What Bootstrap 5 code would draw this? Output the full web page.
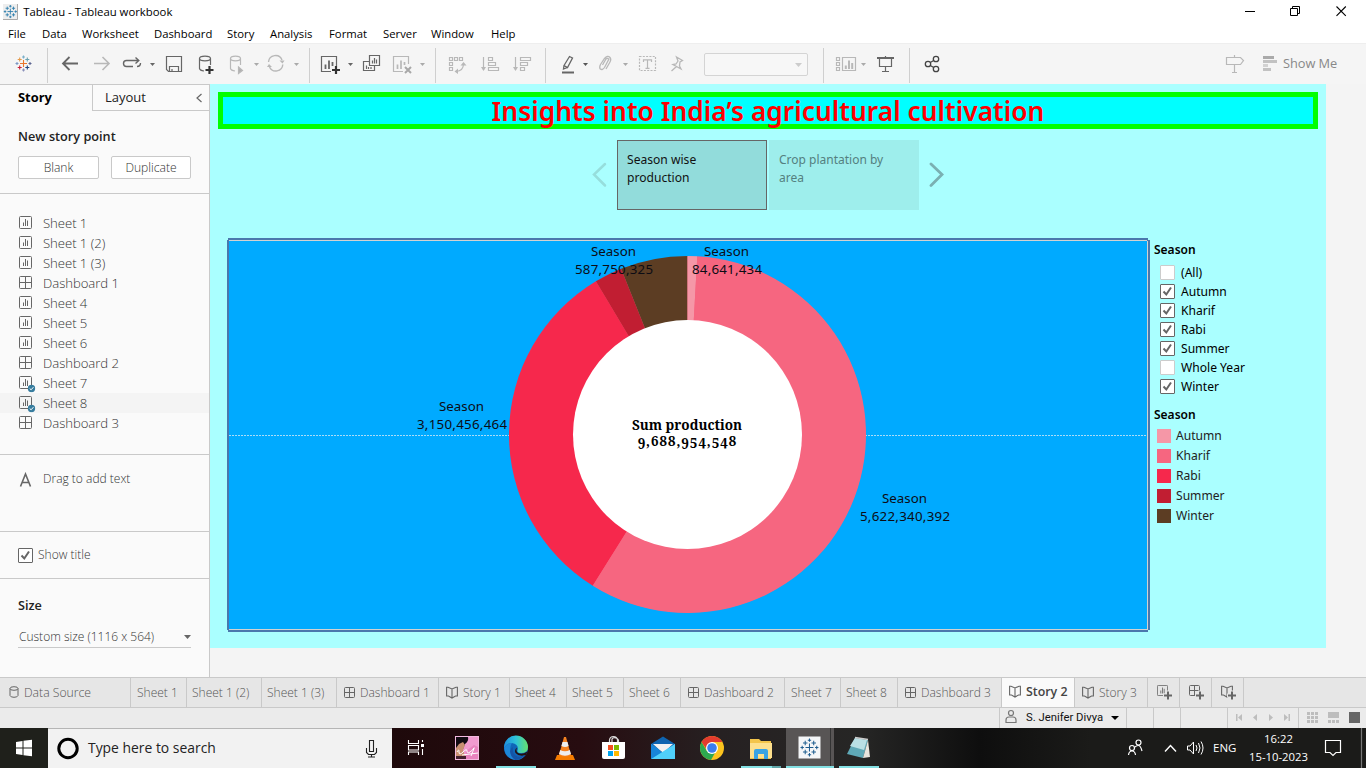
<!DOCTYPE html>
<html lang="en">
<head>
<meta charset="utf-8">
<title>Tableau - Tableau workbook</title>
<link href="https://cdn.jsdelivr.net/npm/bootstrap@5.3.0/dist/css/bootstrap.min.css" rel="stylesheet">
<style>
html,body{height:100%;overflow:hidden}
body{font-family:"Open Sans","Noto Sans",sans-serif;font-size:12px;line-height:1.2;color:#333;background:#f4f4f4}
svg{display:block;flex:none}
.app{width:1366px;height:768px;white-space:nowrap}
.titlebar{height:23px;padding-left:3px;color:#000;font-size:11.35px}
.menubar{height:20px;padding:2px 0 0 8px;color:#000;font-size:11.3px}
.m1{width:34px}.m2{width:40px}.m3{width:72px}.m4{width:73px}.m5{width:43px}.m6{width:59px}.m7{width:54px}.m8{width:48px}.m9{width:60px}
.toolbar-strip{height:41px;background:#f5f5f5;border-top:1px solid #eee;padding-top:1px}
.tsep{width:1px;height:35px;background:#cfcfcf;margin-top:3px;flex:none}
.toolbar-strip svg{fill:none;stroke:#666;stroke-width:1.2}
.toolbar-strip .off{stroke:#b8b8b8}
.combo{width:104px;height:23px;border:1px solid #d4d4d4;border-radius:2px;margin:8px 15px 0 13px;background:#f7f7f7;padding-right:5px;flex:none}
.showme{font-size:12.8px;color:#888;letter-spacing:-.05px;width:83px;padding-top:11px}
.workspace{height:593px}
.side{width:210px;background:#fafafa;border-right:1px solid #c9c9c9;border-top:1px solid #c9c9c9;color:#333;font-weight:300}
.side .hd{font-weight:600;font-size:12.7px;color:#222}
.side-tabs{height:26px}
.side-tabs .on{width:92px;padding-left:18px;font-weight:700;color:#000;font-size:12.9px}
.side-tabs .off-tab{border-left:1px solid #c9c9c9;border-bottom:1px solid #c9c9c9;color:#222;font-weight:400;font-size:13px;padding:0 6px 0 12px}
.blk{border-bottom:1px solid #c9c9c9}
.b-new{height:83px;padding:18px 18px 0}
.b-list{height:261px;padding-top:19px}
.b-drag{height:77px;padding:17px 18px 0}
.b-title{height:47px;padding-left:18px}
.b-size{height:98px;padding:19px 18px 0}
.pt-btn{height:23px;background:#fff;border:1px solid #c9c9c9;border-radius:2px;font-size:12.1px;color:#333;padding:0;line-height:21px;--bs-btn-font-weight:300}
.pt-btn.a{width:81px}.pt-btn.b{width:80px}
.row-item{height:20px;padding-left:19px;font-size:13.15px;letter-spacing:-.05px}
.row-item svg{margin:0 11px 1px 0}
.row-item span{padding-top:1px}
.row-item.hov{background:#f4f4f4}
.sizebox{border-bottom:1px solid #c9c9c9;height:23px;width:173px;font-size:12px;padding:1px 0 0 1px;margin-top:12px}
.story-canvas{width:1116px;height:564px;background:#aaffff;padding:8px 8px 0}
.story-title{height:37px;border:5px solid #0f0;background:#0ff;color:#f00;font:600 26.3px/29px "Noto Sans",sans-serif;letter-spacing:.04px;text-align:center}
.nav-pts{height:70px;margin-top:11px}
.pt{width:150px;height:70px;padding:11px 9px 0;font:12.1px/18px "Noto Sans",sans-serif;white-space:normal}
.pt.cur{background:#92dcdb;border:1px solid #666;color:#111;padding-top:10px}
.pt.nxt{background:#9eeeec;color:#54807f;margin-left:2px;padding-left:10px;font-size:12px}
.viz{margin:28px 0 0 8px}
.legend{width:160px;padding:5px 0 0 4px;font-family:"Noto Sans",sans-serif;color:#000;font-size:12.1px}
.legend .lh{font-weight:600;font-size:12px;height:14px;line-height:14px}
.fl-first{margin-top:6px}
.fl{height:19px;padding-left:6px}
.fl .lb,.lg .lb{padding-top:1px}
.cb{width:15px;height:15px;border:1px solid #666;background:#fff;border-radius:1px;margin-right:6px;flex:none}
.b-title .cb{margin-right:5px}
.cb.no{border-color:#ccc}
.second-lh{margin-top:12px;margin-bottom:4px}
.lg{height:20px;padding-left:3px;color:#222}
.sw{width:14px;height:14px;margin-right:5px}
.tabs-strip{height:31px;background:#e6e6e6;border-top:1px solid #c9c9c9;border-bottom:1px solid #c9c9c9;color:#555;font-size:12px;font-weight:300}
.wt{border-right:1px solid #c9c9c9;padding-left:6px;flex:none;padding-top:1px;font-weight:300}
.wt svg{margin:0 5px 2px 0}
.w131{width:131px;padding-left:9px;font-size:12.2px}.w56{width:56px}.w75{width:75px;padding-left:5px}.w102{width:102px;padding-left:7px}.w71{width:71px;padding-left:7px}.w57{width:57px;padding-left:5px}.w104{width:104px;padding-left:7px}.w73{width:73px;padding-left:7px}.w32{width:32px;padding-left:9px}
.wt.cur{background:#fafafa;font-weight:600;color:#444;padding-top:0;font-size:12.4px}
.status{height:20px;background:#ebebeb;color:#111;font-family:Roboto,sans-serif;font-size:11.3px}
.sc{border-left:1px solid #c9c9c9;flex:none}
.s1{width:127px}.s2{width:27px}.s3{width:47px}.s4{width:71px}.s5{width:68px}
.taskbar{height:40px;background:linear-gradient(90deg,#1f201b 0,#1f201b 48px,#1e090b 392px,#270c10 580px,#262122 720px,#262625 860px,#0e0e0e 980px,#1b1b19 1090px,#1b1b19)}
.search{width:344px;background:#f2f2f2;border-top:1px solid #b5b5b5;font-size:13.9px;color:#222}
.tk{color:#fff;font-size:11.3px}
.active-app{background:#585555}
.eng{width:36px;flex:none;font-size:11.5px}
.clock{width:59px;line-height:18px;flex:none;padding-bottom:1px}
</style>
</head>
<body>
<svg width="0" height="0" class="position-absolute">
<defs>
<symbol id="sheet" viewBox="0 0 13 13"><rect x=".5" y=".5" width="12" height="12" rx="1" fill="none" stroke="#666"/><path d="M4.500 10V6.500M6.500 10V3M8.500 10V4.500" stroke="#666"/></symbol>
<symbol id="dash" viewBox="0 0 13 13"><rect x=".5" y=".5" width="12" height="12" rx="1" fill="none" stroke="#666"/><path d="M6.500 .5V12.500M.5 6.500H12.500" stroke="#666"/></symbol>
<symbol id="dash11" viewBox="0 0 11 11"><rect x=".5" y=".5" width="10" height="10" rx="1" fill="none" stroke="#666"/><path d="M5.500 .5V10.500M.5 5.500H10.500" stroke="#666"/></symbol>
<symbol id="book" viewBox="0 0 12 13"><path d="M.6 1.200H2L6 3 10 1.200H11.400V10H9.500L6 12 2.500 10H.6ZM6 3V12" fill="none" stroke="#666" stroke-width="1.100"/></symbol>
<symbol id="tick" viewBox="0 0 13 13"><path d="M2.500 6.500L5.300 9.500L10 2.500" fill="none" stroke="#666" stroke-width="2"/></symbol>
<symbol id="badge" viewBox="0 0 8 8"><circle cx="4" cy="4" r="3.700" fill="#367c9e"/><path d="M2.200 4L3.600 5.300 5.900 2.700" fill="none" stroke="#fff"/></symbol>
<g id="pluses"><path d="M8 4.500V11.500M4.500 8H11.500"/><path d="M4.200 2V6M2.200 4H6.200M11.800 2V6M9.800 4H13.800M4.200 10V14M2.200 12H6.200M11.800 10V14M9.800 12H13.800"/><path d="M8 0V3M6.500 1.500H9.500M8 13V16M6.500 14.500H9.500M0 8H3M1.500 6.500V9.500M13 8H16M14.500 6.500V9.500"/></g>
</defs>
</svg>
<div class="app d-flex flex-column">
  <header class="bg-white">
    <div class="titlebar d-flex align-items-center">
      <svg width="15" height="16" viewBox="0 0 15 16"><rect width="15" height="16" fill="#eee"/><path d="M14.500 0V15.500H0" fill="none" stroke="#aaa"/><g transform="translate(.8 1) scale(.82)" stroke="#2f7fae" stroke-width="1.100"><use href="#pluses"/></g></svg>
      <span class="ps-1 flex-grow-1">&#8202;Tableau - Tableau workbook</span>
      <svg width="126" height="22" viewBox="1240 0 126 22" fill="none" stroke="#000"><path d="M1245 10.500H1255"/><path d="M1290.500 7.500H1297.500V14.500H1290.500ZM1292.500 7.500V5.500H1299.500V12.500H1297.500"/><path d="M1336.500 5.500L1345.800 14.800M1345.800 5.500L1336.500 14.800" stroke-width="1.100"/></svg>
    </div>
    <nav class="menubar d-flex align-items-center">
      <span class="m1">File</span><span class="m2">Data</span><span class="m3">Worksheet</span><span class="m4">Dashboard</span><span class="m5">Story</span><span class="m6">Analysis</span><span class="m7">Format</span><span class="m8">Server</span><span class="m9">Window</span><span>Help</span>
    </nav>
  </header>

  <div class="toolbar-strip d-flex">
    <svg width="47" height="39" viewBox="0 45 47 39"><g transform="translate(15.500 55.500)" stroke-width="1.100"><path d="M8 4.500V11.500M4.500 8H11.500" stroke="#e8762c"/><path d="M4.200 2V6M2.200 4H6.200" stroke="#e49a4a"/><path d="M11.800 2V6M9.800 4H13.800" stroke="#6aa2b0"/><path d="M4.200 10V14M2.200 12H6.200" stroke="#c72037"/><path d="M11.800 10V14M9.800 12H13.800" stroke="#1f447e"/><path d="M8 0V3M6.500 1.500H9.500" stroke="#7ab0ca"/><path d="M8 13V16M6.500 14.500H9.500" stroke="#8a90ba"/><path d="M0 8H3M1.500 6.500V9.500" stroke="#7b97c4"/><path d="M13 8H16M14.500 6.500V9.500" stroke="#5b6591"/></g></svg>
    <i class="tsep"></i>
    <svg width="38" height="39" viewBox="48 45 38 39"><path stroke-width="1.800" d="M78 63.500H63M69.500 57L63 63.500 69.500 70"/></svg>
    <svg class="off" width="30" height="39" viewBox="86 45 30 39"><path stroke-width="1.600" d="M94 63.500H109M102.500 57L109 63.500 102.500 70"/></svg>
    <svg width="44" height="39" viewBox="116 45 44 39"><path d="M133 66.500H126.500Q123.500 66.500 123.500 63.500T126.500 60.500H139M135.500 57.500L138.800 60.500 135.500 63.500M137 66.500Q140.500 66.500 140.500 63" stroke-width="1.400"/><path d="M150 63H155L152.500 66Z" fill="#666" stroke="none"/></svg>
    <svg width="30" height="39" viewBox="160 45 30 39"><path d="M166.500 56.500H181.500V71.500H168.500L166.500 69.500ZM169.500 71V66.500H178.500V71M172 71V69"/></svg>
    <svg width="34" height="39" viewBox="190 45 34 39"><ellipse cx="205" cy="58.500" rx="5.500" ry="2.300"/><path d="M199.500 58.500V68.500Q200 70.500 204 71M210.500 58.500V65"/><path d="M209.500 66V74M205.500 70H213.500" stroke="#333" stroke-width="2.200"/></svg>
    <svg class="off" width="38" height="39" viewBox="224 45 38 39"><ellipse cx="235.500" cy="58.500" rx="5" ry="2.300"/><path d="M230.500 58.500V68.500Q231 70.500 235 71M240.500 58.500V65"/><path d="M238.500 67L242.500 70.500 238.500 73.500Z" fill="#b0b0b0"/><path d="M254 63H259L256.500 66Z" fill="#aaa" stroke="none"/></svg>
    <svg class="off" width="47" height="39" viewBox="262 45 47 39"><path d="M268.500 62A7 7 0 0 1 282 60M282.800 64.500A7 7 0 0 1 269.500 67" stroke-width="1.400"/><path d="M279.500 60.500H284.500L282.500 63.500ZM267 67H272L269 64Z" fill="#b8b8b8" stroke="none"/><path d="M294 63H299L296.500 66Z" fill="#aaa" stroke="none"/></svg>
    <i class="tsep"></i>
    <svg width="47" height="39" viewBox="310 45 47 39"><path d="M331 71.500H321.500V56.500H336.500V66"/><path d="M325.500 69V64.500M329 69V60.500M332.500 66V62" stroke-width="1.800"/><path d="M336 66V74M332 70H340" stroke="#333" stroke-width="2.200"/><path d="M348 63H353L350.500 66Z" fill="#666" stroke="none"/></svg>
    <svg width="30" height="39" viewBox="357 45 30 39"><path d="M369.500 55.500H379.500V65.500H369.500ZM369 61.500H363.500V70.500H374.500V66M372.500 63.500V60.500M374.500 63.500V58M376.500 63.500V59.500M366.500 69V65.500M368.500 69V67M371 69V67"/></svg>
    <svg class="off" width="48" height="39" viewBox="387 45 48 39"><path d="M403 71.500H393.500V56.500H408.500V64"/><path d="M397.500 69V64.500M401 69V60.500M404.500 65V62" stroke-width="1.700"/><path d="M405 67L411 73M411 67L405 73" stroke="#a8a8a8" stroke-width="2"/><path d="M420 63H425L422.500 66Z" fill="#aaa" stroke="none"/></svg>
    <i class="tsep"></i>
    <svg class="off" width="36" height="39" viewBox="436 45 36 39"><path d="M449.500 57.500H452.500V60.500H449.500ZM454.500 57.500H457.500V60.500H454.500ZM459.500 57.500H462.500V60.500H459.500ZM449.500 62.500H452.500V65.500H449.500ZM449.500 67.500H452.500V70.500H449.500ZM456 71.500Q463.500 71 463.500 63.500"/><path d="M460.500 65.500L463.500 62 466.500 65.500ZM458 68.500L454.500 71.500 458 74Z" fill="#b8b8b8" stroke="none"/></svg>
    <svg class="off" width="34" height="39" viewBox="472 45 34 39"><path d="M483.500 57V70M488.500 57.500H492.500V60.500H488.500ZM488.500 62.500H495.500V65.500H488.500ZM488.500 67.500H498.500V70.500H488.500Z"/><path d="M481 67H486L483.500 71Z" fill="#b8b8b8" stroke="none"/></svg>
    <svg class="off" width="39" height="39" viewBox="506 45 39 39"><path d="M515.500 57V70M520.500 57.500H530.500V60.500H520.500ZM520.500 62.500H527.500V65.500H520.500ZM520.500 67.500H524.500V70.500H520.500Z"/><path d="M513 67H518L515.500 71Z" fill="#b8b8b8" stroke="none"/></svg>
    <i class="tsep"></i>
    <svg width="46" height="39" viewBox="546 45 46 39"><path d="M564 65.500L569.500 56.500 572.500 58 567.500 67.500ZM564 65.500L563.500 69 567.500 67.500" stroke-width="1.300"/><path d="M562 72.500H574" stroke-width="2"/><path d="M583 63H588L585.500 66Z" fill="#555" stroke="none"/></svg>
    <svg class="off" width="40" height="39" viewBox="592 45 40 39"><path d="M602.500 65L606 59Q607.500 57.500 608.800 59.200L604.500 67.500Q602.500 70.500 600.300 69Q599 67.500 600.500 64.500L604.500 58.500Q607.500 55 610 57.500Q611.500 59.500 610 62L606 69" stroke-width="1.300"/><path d="M623 63H628L625.500 66Z" fill="#aaa" stroke="none"/></svg>
    <svg class="off" width="31" height="39" viewBox="632 45 31 39"><rect x="639.500" y="56.500" width="16" height="14" stroke-dasharray="2 1.300"/><path d="M643.500 62V59.800H651.500V62M647.500 60V68M645.500 68.300H649.500"/></svg>
    <svg class="off" width="28" height="39" viewBox="663 45 28 39"><path d="M676.500 57L682.500 60.500 680 62 679.500 66 681 69 673 64.500 676 64 678 61ZM676.500 66.500L671.500 71" stroke-width="1.300"/></svg>
    <div class="combo d-flex align-items-center justify-content-end"><svg width="7" height="4" viewBox="0 0 7 4"><path d="M0 0H7L3.500 4Z" fill="#ccc" stroke="none"/></svg></div>
    <i class="tsep"></i>
    <svg class="off" width="47" height="39" viewBox="824 45 47 39"><path d="M836.500 57.500H839.500V60.500H836.500ZM836.500 62.500H839.500V65.500H836.500ZM836.500 67.500H839.500V70.500H836.500ZM842.500 57.500H855.500V70.500H842.500Z"/><path d="M845.800 69V65.500M849 69V60.500M852.200 69V63" stroke-width="2"/><path d="M861 63H866L863.500 66Z" fill="#aaa" stroke="none"/></svg>
    <svg width="38" height="39" viewBox="871 45 38 39"><path d="M877 58H894" stroke-width="2"/><path d="M879.500 58V66.500H891.500V58M885.500 56V58M885.500 66.500V71M882 71.500H889"/></svg>
    <i class="tsep"></i>
    <svg width="300" height="39" viewBox="910 45 300 39"><g stroke="#444" stroke-width="1.300"><circle cx="928" cy="64" r="2.700"/><circle cx="936" cy="59" r="2.700"/><circle cx="936" cy="69" r="2.700"/><path d="M930.300 62.500L933.700 60.500M930.300 65.500L933.700 67.500"/></g></svg>
    <svg class="off" width="50" height="39" viewBox="1210 45 50 39"><path d="M1226.500 57.500H1240.500L1243.500 60.500 1240.500 64.500H1226.500ZM1234.500 55V57M1234.500 64.500V72M1232 72.500H1237"/></svg>
    <svg width="23" height="39" viewBox="1260 45 23 39" ><g stroke="none"><path d="M1263 56H1274V59H1263Z" fill="#aaa"/><path d="M1263 60H1277V63H1263ZM1263 68H1271V71H1263Z" fill="#c2c2c2"/><path d="M1263 64H1268V67H1263Z" fill="#d2d2d2"/></g></svg>
    <span class="showme">Show Me</span>
  </div>

  <main class="workspace d-flex">
    <aside class="side flex-shrink-0">
      <div class="side-tabs d-flex">
        <div class="on d-flex align-items-center">Story</div>
        <div class="off-tab flex-grow-1 d-flex align-items-center justify-content-between">Layout<svg width="7" height="10" viewBox="0 0 7 10"><path d="M5.500 1L1 5 5.500 9" fill="none" stroke="#666" stroke-width="1.200"/></svg></div>
      </div>
      <section class="blk b-new">
        <div class="hd">New story point</div>
        <div class="d-flex justify-content-between mt-2 pt-1"><button class="btn pt-btn a">Blank</button><button class="btn pt-btn b">Duplicate</button></div>
      </section>
      <section class="blk b-list">
        <div class="row-item d-flex align-items-center"><svg width="13" height="13"><use href="#sheet"/></svg><span>Sheet 1</span></div>
        <div class="row-item d-flex align-items-center"><svg width="13" height="13"><use href="#sheet"/></svg><span>Sheet 1 (2)</span></div>
        <div class="row-item d-flex align-items-center"><svg width="13" height="13"><use href="#sheet"/></svg><span>Sheet 1 (3)</span></div>
        <div class="row-item d-flex align-items-center"><svg width="13" height="13"><use href="#dash"/></svg><span>Dashboard 1</span></div>
        <div class="row-item d-flex align-items-center"><svg width="13" height="13"><use href="#sheet"/></svg><span>Sheet 4</span></div>
        <div class="row-item d-flex align-items-center"><svg width="13" height="13"><use href="#sheet"/></svg><span>Sheet 5</span></div>
        <div class="row-item d-flex align-items-center"><svg width="13" height="13"><use href="#sheet"/></svg><span>Sheet 6</span></div>
        <div class="row-item d-flex align-items-center"><svg width="13" height="13"><use href="#dash"/></svg><span>Dashboard 2</span></div>
        <div class="row-item d-flex align-items-center"><svg width="13" height="13" overflow="visible"><use href="#sheet" width="13" height="13"/><use href="#badge" x="8.500" y="8.500" width="8" height="8"/></svg><span>Sheet 7</span></div>
        <div class="row-item hov d-flex align-items-center"><svg width="13" height="13" overflow="visible"><use href="#sheet" width="13" height="13"/><use href="#badge" x="8.500" y="8.500" width="8" height="8"/></svg><span>Sheet 8</span></div>
        <div class="row-item d-flex align-items-center"><svg width="13" height="13"><use href="#dash"/></svg><span>Dashboard 3</span></div>
      </section>
      <section class="blk b-drag d-flex align-items-start">
        <svg width="25" height="16" viewBox="0 0 25 16"><path d="M2.500 14.500L7.500 2 12.500 14.500M4.300 10.500H10.700" fill="none" stroke="#666" stroke-width="1.600"/></svg><span class="mt-auto mb-auto h-100">Drag to add text</span>
      </section>
      <section class="blk b-title d-flex align-items-center"><span class="cb"><svg width="13" height="13"><use href="#tick"/></svg></span><span>Show title</span></section>
      <section class="b-size">
        <div class="hd">Size</div>
        <div class="sizebox d-flex align-items-center justify-content-between">Custom size (1116 x 564)<svg width="7" height="4" viewBox="0 0 7 4"><path d="M0 0H7L3.500 4Z" fill="#666"/></svg></div>
      </section>
    </aside>

    <div class="story-canvas">
      <h1 class="story-title m-0">Insights into India’s agricultural cultivation</h1>
      <div class="nav-pts d-flex align-items-center justify-content-center">
        <svg width="25" height="26" viewBox="0 0 25 26"><path d="M13 2L2 12.500 13 23.500" fill="none" stroke="#96dedc" stroke-width="2.500" stroke-linecap="round"/></svg>
        <div class="pt cur">Season wise production</div>
        <div class="pt nxt">Crop plantation by area</div>
        <svg width="25" height="26" viewBox="0 0 25 26"><path d="M12 2L23 12.500 12 23.500" fill="none" stroke="#7ab0b2" stroke-width="2.800" stroke-linecap="round"/></svg>
      </div>
      <div class="viz d-flex">
        <svg width="924" height="394" viewBox="226 238 924 394" font-family="Noto Sans, sans-serif" font-size="13.300" text-anchor="middle" fill="#0c0c14">
          <path d="M228 238H1148V240H1150V630H1148V632H228V630H227V240H228Z" fill="#4a78ad"/>
          <path d="M229 240H1147V241H1148V630H229Z" fill="#d2d2d2"/>
          <rect x="229" y="241" width="918" height="388" fill="#00aaff"/>
          <path d="M229 435.500H1147" stroke="#a9dcf8" stroke-dasharray="2 1"/>
          <circle cx="687.500" cy="434.500" r="178" fill="#f66680"/>
          <path d="M687.500 434.500L592.770 585.800A178.500 178.500 0 0 1 595.890 281.300Z" fill="#f6284c"/>
          <path d="M687.500 434.500L595.890 281.300A178.500 178.500 0 0 1 621.090 268.810Z" fill="#c11e32"/>
          <path d="M687.500 434.500L621.090 268.810A178.500 178.500 0 0 1 687.500 256Z" fill="#5c3d23"/>
          <path d="M687.500 434.500V256A178.500 178.500 0 0 1 697.290 256.270Z" fill="#f597a7"/>
          <path d="M687.500 434.500L697.290 256.270A178.500 178.500 0 1 1 592.770 585.800Z" fill="#f66680"/>
          <circle cx="687.500" cy="434.500" r="114.500" fill="#fff"/>
          <text x="613.500" y="256" textLength="45">Season</text><text x="614" y="274" textLength="78">587,750,325</text>
          <text x="726.500" y="256" textLength="45">Season</text><text x="727" y="274" textLength="70">84,641,434</text>
          <text x="461.500" y="411" textLength="45">Season</text><text x="462" y="429" textLength="90">3,150,456,464</text>
          <text x="904.500" y="503" textLength="45">Season</text><text x="905" y="521" textLength="90">5,622,340,392</text>
          <g font-family="Noto Serif, serif" font-weight="700" fill="#000" font-size="13.500" style="font-variant-numeric:oldstyle-nums"><text x="687" y="430" textLength="110">Sum production</text><text x="687" y="445.500" textLength="99">9,688,954,548</text></g>
        </svg>
        <div class="legend">
          <div class="lh">Season</div>
          <div class="fl fl-first d-flex align-items-center"><span class="cb no"></span><span class="lb">(All)</span></div>
          <div class="fl d-flex align-items-center"><span class="cb"><svg width="13" height="13"><use href="#tick"/></svg></span><span class="lb">Autumn</span></div>
          <div class="fl d-flex align-items-center"><span class="cb"><svg width="13" height="13"><use href="#tick"/></svg></span><span class="lb">Kharif</span></div>
          <div class="fl d-flex align-items-center"><span class="cb"><svg width="13" height="13"><use href="#tick"/></svg></span><span class="lb">Rabi</span></div>
          <div class="fl d-flex align-items-center"><span class="cb"><svg width="13" height="13"><use href="#tick"/></svg></span><span class="lb">Summer</span></div>
          <div class="fl d-flex align-items-center"><span class="cb no"></span><span class="lb">Whole Year</span></div>
          <div class="fl d-flex align-items-center"><span class="cb"><svg width="13" height="13"><use href="#tick"/></svg></span><span class="lb">Winter</span></div>
          <div class="lh second-lh">Season</div>
          <div class="lg d-flex align-items-center"><svg class="sw"><rect width="14" height="14" fill="#f597a7"/></svg><span class="lb">Autumn</span></div>
          <div class="lg d-flex align-items-center"><svg class="sw"><rect width="14" height="14" fill="#f66680"/></svg><span class="lb">Kharif</span></div>
          <div class="lg d-flex align-items-center"><svg class="sw"><rect width="14" height="14" fill="#f6284c"/></svg><span class="lb">Rabi</span></div>
          <div class="lg d-flex align-items-center"><svg class="sw"><rect width="14" height="14" fill="#c11e32"/></svg><span class="lb">Summer</span></div>
          <div class="lg d-flex align-items-center"><svg class="sw"><rect width="14" height="14" fill="#5c3d23"/></svg><span class="lb">Winter</span></div>
        </div>
      </div>
    </div>
  </main>

  <nav class="tabs-strip d-flex">
    <div class="wt w131 d-flex align-items-center"><svg width="10" height="12" viewBox="0 0 10 12" fill="none" stroke="#666"><ellipse cx="5" cy="2.500" rx="4" ry="1.800"/><path d="M1 2.500V9.500Q1.500 11.300 5 11.300T9 9.500V2.500"/></svg>Data Source</div>
    <div class="wt w56 d-flex align-items-center">Sheet 1</div>
    <div class="wt w75 d-flex align-items-center">Sheet 1 (2)</div>
    <div class="wt w75 d-flex align-items-center">Sheet 1 (3)</div>
    <div class="wt w102 d-flex align-items-center"><svg width="11" height="11"><use href="#dash11"/></svg>Dashboard 1</div>
    <div class="wt w71 d-flex align-items-center"><svg width="12" height="13"><use href="#book"/></svg>Story 1</div>
    <div class="wt w57 d-flex align-items-center">Sheet 4</div>
    <div class="wt w57 d-flex align-items-center">Sheet 5</div>
    <div class="wt w57 d-flex align-items-center">Sheet 6</div>
    <div class="wt w104 d-flex align-items-center"><svg width="11" height="11"><use href="#dash11"/></svg>Dashboard 2</div>
    <div class="wt w56 d-flex align-items-center">Sheet 7</div>
    <div class="wt w57 d-flex align-items-center">Sheet 8</div>
    <div class="wt w104 d-flex align-items-center"><svg width="11" height="11"><use href="#dash11"/></svg>Dashboard 3</div>
    <div class="wt w73 cur d-flex align-items-center"><svg width="12" height="13"><use href="#book"/></svg>Story 2</div>
    <div class="wt w73 d-flex align-items-center"><svg width="12" height="13"><use href="#book"/></svg>Story 3</div>
    <div class="wt w32 d-flex align-items-center"><svg width="16" height="15"><use href="#sheet" width="11" height="11"/><path d="M11 5.500V15M6 10.500H16" stroke="#e6e6e6" stroke-width="4"/><path d="M11 6.500V14.500M7 10.500H15" stroke="#666" stroke-width="2"/></svg></div>
    <div class="wt w32 d-flex align-items-center"><svg width="16" height="15"><use href="#dash11" width="11" height="11"/><path d="M11 5.500V15M6 10.500H16" stroke="#e6e6e6" stroke-width="4"/><path d="M11 6.500V14.500M7 10.500H15" stroke="#666" stroke-width="2"/></svg></div>
    <div class="wt w32 d-flex align-items-center"><svg width="16" height="15"><use href="#book" width="12" height="13"/><path d="M11 5.500V15M6 10.500H16" stroke="#e6e6e6" stroke-width="4"/><path d="M11 6.500V14.500M7 10.500H15" stroke="#666" stroke-width="2"/></svg></div>
  </nav>

  <div class="status d-flex justify-content-end">
    <div class="sc s1 d-flex align-items-center"><svg width="26" height="20" viewBox="1000 708 26 20" fill="none" stroke="#777" stroke-width="1.200"><circle cx="1011" cy="713" r="2.500"/><path d="M1006 722.500V720Q1006 717 1009 717H1013Q1016 717 1016 720V722.500Z"/></svg><span>S. Jenifer Divya</span><svg class="ms-2" width="8" height="4" viewBox="0 0 8 4"><path d="M0 0H8L4 4Z"/></svg></div>
    <div class="sc s2"></div><div class="sc s2"></div><div class="sc s3"></div>
    <div class="sc s4"><svg width="70" height="20" viewBox="1228 708 70 20" fill="#bdbdbd"><path d="M1236 714H1237.500V721H1236ZM1242 714V721L1238 717.500ZM1257 714V721L1253 717.500ZM1269 714V721L1273 717.500ZM1284 714V721L1288 717.500ZM1288.500 714H1290V721H1288.500Z"/></svg></div>
    <div class="sc s5"><svg width="67" height="20" viewBox="1299 708 67 20" fill="#bdbdbd"><path d="M1307 712h3v3h-3zM1311 712h3v3h-3zM1315 712h3v3h-3zM1307 716h3v3h-3zM1311 716h3v3h-3zM1315 716h3v3h-3zM1307 720h3v3h-3zM1311 720h3v3h-3zM1315 720h3v3h-3zM1328 712h11v6h-11zM1328 720h3v3h-3zM1332 720h3v3h-3zM1336 720h3v3h-3z"/><path d="M1349 712h11v11h-11z" fill="#666"/></svg></div>
  </div>

  <footer class="taskbar d-flex">
    <svg width="48" height="40" viewBox="0 728 48 40" fill="#fff"><path d="M16 742L22.500 741V747.500H16ZM23.500 740.800L32 739.800V747.500H23.500ZM16 748.500H22.500V755L16 754ZM23.500 748.500H32V756.300L23.500 755.200Z"/></svg>
    <div class="search d-flex align-items-center">
      <svg width="40" height="38" viewBox="48 729 40 38"><circle cx="68" cy="747.500" r="9.200" fill="none" stroke="#000" stroke-width="3"/></svg>
      <span class="flex-grow-1">Type here to search</span>
      <svg width="31" height="38" viewBox="361 729 31 38" fill="none" stroke="#222" stroke-width="1.100"><path d="M369.500 739.500H373.500V750.500H369.500ZM366.500 747V751.500L368.500 753.500H374.500L376.500 751.500V747M371.500 753.500V756M368 756H375"/></svg>
    </div>
    <svg width="48" height="40" viewBox="392 728 48 40" fill="none" stroke="#fff" stroke-width="1.100"><path d="M408.500 740V743.500H418.500V740M408.500 755V752H418.500V755M408.500 745.500H418.500V750H408.500ZM422.500 740V742M422.500 749V755"/><path d="M421 744H424V747H421Z" fill="#fff" stroke="none"/></svg>
    <svg width="52" height="40" viewBox="440 728 52 40"><rect x="455" y="736" width="24" height="24" fill="#f29bd0"/><path d="M456 737H468Q469 741 465 744L463 749 456 751Z" fill="#120b12"/><path d="M456 748L459 744 463 742 465 745 463 750 466 759H456Z" fill="#c99072"/><path d="M466 751L474 745 478 747V759H465Z" fill="#e983bf"/><path d="M456 756H466V759H456Z" fill="#43202d"/><path d="M457 752Q459 748 459 752T463 752 467 751 470 752 474 748 471 756M462 755L478 753" fill="none" stroke="#fff"/><rect x="455.500" y="736.500" width="23" height="23" fill="none" stroke="#f3b9df"/></svg>
    <svg width="48" height="40" viewBox="492 728 48 40"><defs><linearGradient id="eg" x1="0" x2="1"><stop offset="0" stop-color="#1f8fdd"/><stop offset=".5" stop-color="#2fc3d8"/><stop offset="1" stop-color="#67e06b"/></linearGradient></defs><circle cx="516" cy="748" r="12" fill="#0f66b8"/><path d="M504 748A12 12 0 0 1 528 747Q528 753 521 753Q516 753 518 749Q518 744 512 743Q507 743 504 748Z" fill="url(#eg)"/><path d="M504.200 748Q507 743 512 743Q509 747 511 752Q515 758 524 756.500Q520 760 515 760Q505 758 504.200 748Z" fill="#1d86d6"/><path d="M517 747.500Q515.500 751 518 753Q522 755 527.500 751.500L526 755Q519 757 515.500 753Q514 750 517 747.500Z" fill="#24100f"/><path d="M513 747Q512 752 515 755Q519 758 525 755Q521 760 515 760Q510 756 510 751Q511 748 513 747Z" fill="#1553a5"/><path d="M496 766H536V768H496Z" fill="#83e0e3"/></svg>
    <svg width="50" height="40" viewBox="540 728 50 40"><path d="M557 755H573L575 760H555Z" fill="#f57c00"/><path d="M564 737H566L571 755Q565 758 559 755Z" fill="#f58220"/><path d="M562.500 742H567.500L568.600 746Q565 748 561.400 746ZM560.200 750Q565 752.500 569.800 750L571 754Q565 757.500 559 754Z" fill="#eee"/></svg>
    <svg width="49" height="40" viewBox="590 728 49 40"><path d="M609.500 742V740Q610 736.500 613.500 736.500T617.500 740V742M612 742V739Q613 737 616 738T618.500 742" fill="none" stroke="#ddd" stroke-width="1.200"/><path d="M602 742H625V757Q625 759 623 759H604Q602 759 602 757Z" fill="#fff"/><path d="M608 745h5v5h-5z" fill="#f25022"/><path d="M614 745h5v5h-5z" fill="#7fba00"/><path d="M608 751h5v5h-5z" fill="#00a4ef"/><path d="M614 751h5v5h-5z" fill="#ffb900"/></svg>
    <svg width="49" height="40" viewBox="639 728 49 40"><path d="M651 744L663 736.500 675 744V750H651Z" fill="#0f64b0"/><path d="M653 744H673L663 753Z" fill="#f2f2f2"/><path d="M651 744L663 753 675 744V759H651Z" fill="#28a8ea"/><path d="M651 759L675 744V759Z" fill="#50d0fb"/><path d="M651 744L662 752 651 759Z" fill="#1784d8"/></svg>
    <svg width="49" height="40" viewBox="688 728 49 40"><circle cx="712" cy="748" r="12" fill="#fcc31e"/><path d="M701.600 742A12 12 0 0 0 711 760L716 751 706.800 751Z" fill="#2da94f"/><path d="M701.600 742A12 12 0 0 1 722.400 742H712L707 750Z" fill="#e33b2e"/><circle cx="712" cy="748" r="6" fill="#fff"/><circle cx="712" cy="748" r="4.800" fill="#3b7ded"/></svg>
    <svg width="49" height="40" viewBox="737 728 49 40"><path d="M750 739H759L761 741H771V759H750Z" fill="#f3c54b"/><path d="M750 743H772V758H750Z" fill="#fde08d"/><path d="M754 751Q754 749 756 749H766Q768 749 768 751V759H764V754H758V759H754Z" fill="#38a3e4"/><path d="M741 766H772V768H741Z" fill="#83e0e3"/><path d="M772 766H781V768H772Z" fill="#5fa5a8"/></svg>
    <svg class="active-app" width="48" height="40" viewBox="786 728 48 40"><path d="M830 728H831V768H830Z" fill="#333"/><rect x="798.500" y="736.500" width="22" height="22" fill="#f4f6f8"/><g transform="translate(800.500 738.500) scale(1.120)" stroke="#1d5c8e" stroke-width=".9"><use href="#pluses"/></g><path d="M786 766H834V768H786Z" fill="#83e0e3"/></svg>
    <svg width="286" height="40" viewBox="834 728 286 40"><path d="M855 738L868 740 863 758 847 754Z" fill="#5fa9b7"/><path d="M855 738L867 740 864 750 850 746Z" fill="#b9dfe4"/><path d="M868 740L870 757 863 758Z" fill="#e8e4dc"/><path d="M855 737.500L868 739.500" stroke="#ccc" stroke-width="1.500"/><path d="M839 766H879V768H839Z" fill="#83e0e3"/></svg>
    <div class="tk d-flex flex-grow-1">
      <svg width="93" height="40" viewBox="1120 728 93 40" fill="none" stroke="#fff" stroke-width="1.200"><circle cx="1138.500" cy="742.500" r="2.500"/><circle cx="1132" cy="748" r="2.500"/><path d="M1128.500 755Q1129 751 1132 751T1135.500 755M1135 747Q1136.500 745.500 1138.500 745.500T1142 751"/><path d="M1165 751.500L1170.500 745.500 1176 751.500" stroke-width="1.400"/><path d="M1187.500 746H1190L1193.500 742V754L1190 750H1187.500ZM1196 745Q1198 748 1196 751M1198.500 743Q1201.500 748 1198.500 753M1201 741.500Q1205 748 1201 754.500" stroke-width="1"/></svg>
      <span class="d-flex align-items-center eng">ENG</span>
      <div class="clock d-flex flex-column align-items-center justify-content-center"><span>16:22</span><span>15-10-2023</span></div>
      <svg width="58" height="40" viewBox="1308 728 58 40" fill="none" stroke="#fff" stroke-width="1.200"><path d="M1325.500 740.500H1340.500V752.500H1336L1333 755.500 1330 752.500H1325.500Z"/><path d="M1361.500 728V768" stroke="#777"/></svg>
    </div>
  </footer>
</div>
<script src="https://cdn.jsdelivr.net/npm/bootstrap@5.3.0/dist/js/bootstrap.bundle.min.js"></script>
</body>
</html>
